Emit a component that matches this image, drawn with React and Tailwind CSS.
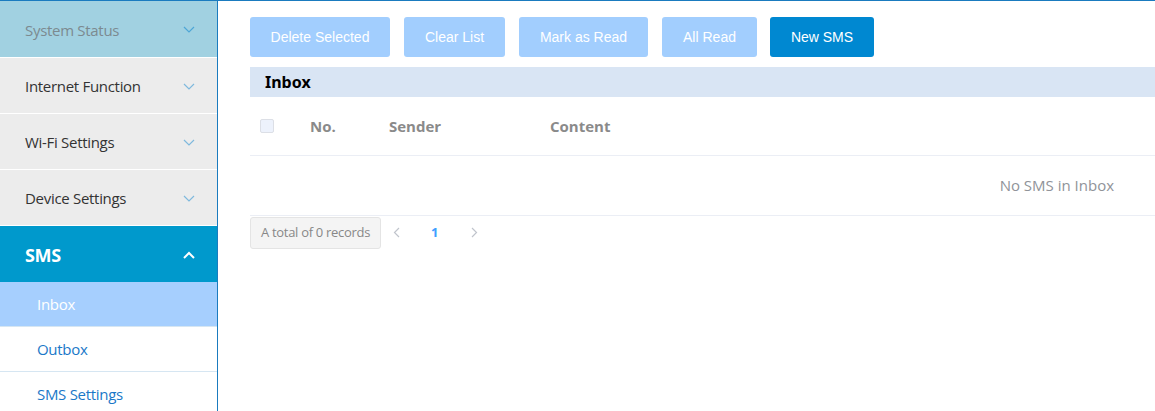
import React from 'react';

const menu = ['Internet Function', 'Wi-Fi Settings', 'Device Settings'];
const subMenu = ['Inbox', 'Outbox', 'SMS Settings'];
const buttons = [
  { label: 'Delete Selected', w: 'w-[140px]' },
  { label: 'Clear List', w: 'w-[101px]' },
  { label: 'Mark as Read', w: 'w-[129px]' },
  { label: 'All Read', w: 'w-[95px]' },
];

const Chevron = ({ up = false, className = '' }) => (
  <svg width="12" height="8" viewBox="0 0 12 8" className={className}>
    <path
      d={up ? 'M1 7 L6 2 L11 7' : 'M1 1 L6 6 L11 1'}
      fill="none"
      stroke="currentColor"
      strokeWidth={up ? 2 : 1.2}
    />
  </svg>
);

const Arrow = ({ left = false }) => (
  <svg width="7" height="11" viewBox="0 0 7 11">
    <path
      d={left ? 'M6 1 L1.5 5.5 L6 10' : 'M1 1 L5.5 5.5 L1 10'}
      fill="none"
      stroke="currentColor"
      strokeWidth="1.2"
    />
  </svg>
);

const Sidebar = () => (
  <aside className="w-[218px] shrink-0 border-r border-[#1a7bbf] bg-white font-['Open_Sans',sans-serif] tracking-[-0.3px]">
    {/* 상단 메뉴 */}
    <div className="flex h-[57px] items-center justify-between border-b border-white bg-[#a1d1e1] pl-[25px] pr-[22px] pt-[2px] text-[15px] text-[#7c8a90]">
      <span>System Status</span>
      <Chevron className="text-[#4ea6d6]" />
    </div>
    {menu.map((m) => (
      <div
        key={m}
        className="flex h-[56px] items-center justify-between border-b border-white bg-[#ececec] pl-[25px] pr-[22px] pt-[2px] text-[15px] text-[#333]"
      >
        <span>{m}</span>
        <Chevron className="text-[#7fb9dd]" />
      </div>
    ))}
    {/* SMS 메뉴 */}
    <div className="flex h-[56px] items-center justify-between bg-[#0099cc] pl-[25px] pr-[22px] pt-[2px] text-[18px] font-bold text-white">
      <span>SMS</span>
      <Chevron up />
    </div>
    {subMenu.map((s, i) => (
      <div
        key={s}
        className={
          i === 0
            ? 'flex h-[45px] items-center border-b border-[#d6e6f2] bg-[#a6cffe] pl-[37px] pt-[1px] text-[15px] text-white'
            : 'flex h-[45px] items-center border-b border-[#d6e6f2] bg-white pl-[37px] pt-[1px] text-[15px] text-[#1a78c8]'
        }
      >
        {s}
      </div>
    ))}
  </aside>
);

const App = () => {
  return (
    <div className="flex h-[411px] w-[1155px] overflow-hidden border-t border-[#1a7bbf] bg-white">
      <Sidebar />
      <main className="flex-1 pl-[32px] pt-[16px]">
        <div className="flex gap-[14px] font-['Liberation_Sans',sans-serif] text-[14px] text-white">
          {buttons.map((b) => (
            <button key={b.label} className={`${b.w} h-[40px] rounded-[3px] bg-[#a2cefe]`}>
              {b.label}
            </button>
          ))}
          <button className="-ml-[1px] h-[40px] w-[104px] rounded-[3px] bg-[#0088d1]">New SMS</button>
        </div>

        <div className="mt-[10px] flex h-[30px] items-center bg-[#d9e5f4] pl-[15px] font-['Noto_Sans',sans-serif] text-[16px] font-bold text-black">
          Inbox
        </div>

        <div className="font-['Open_Sans',sans-serif]">
          <div className="flex h-[59px] items-center border-b border-[#ebeef5] text-[15px] font-bold text-[#8a8a8a]">
            <span className="ml-[10px] h-[14px] w-[14px] rounded-[2px] border border-[#dcdfe6] bg-[#edf2fc]" />
            <span className="ml-[36px] w-[79px]">No.</span>
            <span className="w-[161px]">Sender</span>
            <span>Content</span>
          </div>
          <div className="flex h-[60px] items-center justify-end border-b border-[#ebeef5] pr-[41px] text-[15px] text-[#909399]">
            No SMS in Inbox
          </div>
          <div className="flex h-[33px] items-center text-[13px]">
            <span className="flex h-[32px] items-center rounded-[3px] border border-[#e4e4e4] bg-[#f4f4f4] px-[10px] tracking-[-0.3px] text-[#888]">
              A total of 0 records
            </span>
            <span className="ml-[12px] flex text-[#c0c4cc]">
              <Arrow left />
            </span>
            <span className="ml-[31px] font-bold text-[#409eff]">1</span>
            <span className="ml-[32px] flex text-[#c0c4cc]">
              <Arrow />
            </span>
          </div>
        </div>
      </main>
    </div>
  );
};

export default App;
